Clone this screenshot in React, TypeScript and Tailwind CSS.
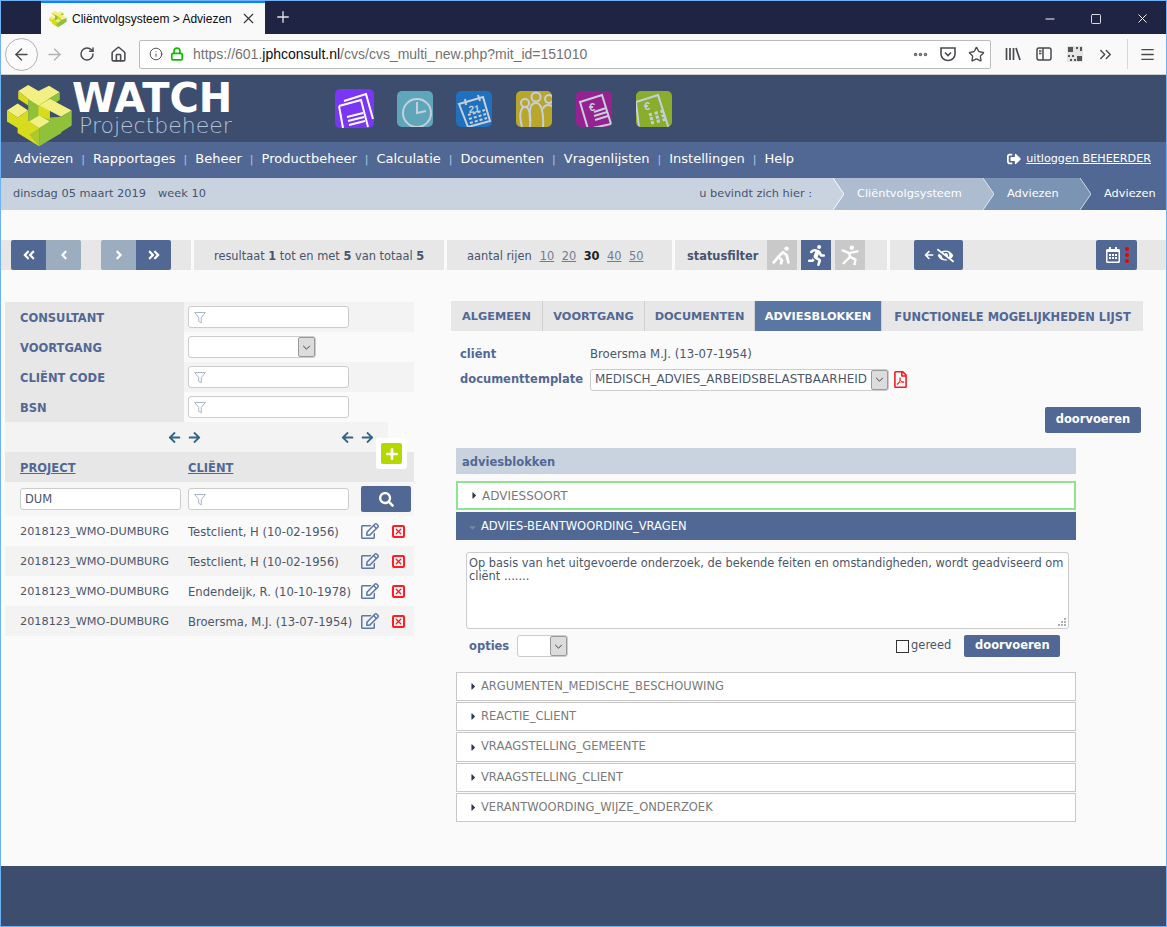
import type { ReactNode } from "react";
import { ArrowLeft, ArrowRight, Info, Lock, Minus, Plus, RotateCw, Square, X, Ellipsis, Star, Home, Menu, ChevronsRight } from "lucide-react";
import {
  FaAngleDoubleLeft,
  FaAngleDoubleRight,
  FaAngleLeft,
  FaAngleRight,
  FaArrowLeft,
  FaArrowRight,
  FaCaretDown,
  FaCaretRight,
  FaEyeSlash,
  FaRegCalendarAlt,
  FaRegEdit,
  FaRegFilePdf,
  FaRunning,
  FaSearch,
  FaSignOutAlt,
} from "react-icons/fa";

const navItems = ["Adviezen", "Rapportages", "Beheer", "Productbeheer", "Calculatie", "Documenten", "Vragenlijsten", "Instellingen", "Help"];
const rowSizes = ["10", "20", "30", "40", "50"];
const tabs = [
  { label: "ALGEMEEN", width: "w-[92px]", size: "text-[11.3px]" },
  { label: "VOORTGANG", width: "w-[102px]", size: "text-[11.3px]" },
  { label: "DOCUMENTEN", width: "w-[110px]", size: "text-[11.3px]" },
  { label: "ADVIESBLOKKEN", width: "w-[127px]", size: "text-[11.3px]", active: true },
  { label: "FUNCTIONELE MOGELIJKHEDEN LIJST", width: "w-[261px]", size: "text-[11.45px]" },
];
const results = [
  { client: "Testclient, H (10-02-1956)" },
  { client: "Testclient, H (10-02-1956)" },
  { client: "Endendeijk, R. (10-10-1978)" },
  { client: "Broersma, M.J. (13-07-1954)" },
];
const closedBlocks = [
  { label: "ARGUMENTEN_MEDISCHE_BESCHOUWING", height: "h-[29px]" },
  { label: "REACTIE_CLIENT", height: "h-[29px]" },
  { label: "VRAAGSTELLING_GEMEENTE", height: "h-[30px]" },
  { label: "VRAAGSTELLING_CLIENT", height: "h-[29px]" },
  { label: "VERANTWOORDING_WIJZE_ONDERZOEK", height: "h-[29px]" },
];

function WatchLogo({ className }: { className: string }) {
  return (
    <svg viewBox="15 15 202 194" className={className}>
      <polygon fill="#8fc23a" points="82,62 147,60 147,130 115,150 82,130" />
      <polygon fill="#d9dc1e" points="113,82 147,62 147,125 113,112" />
      <polygon fill="#f2f084" points="52,38 82,20 113,38 145,22 177,42 147,60 113,82 82,62" />
      <polygon fill="#d9dc1e" points="52,38 82,62 82,82 52,62" />
      <polygon fill="#8fc23a" points="177,42 177,65 147,84 147,60" />
      <polygon fill="#f2f084" points="18,97 50,76 82,97 50,118" />
      <polygon fill="#d9dc1e" points="18,97 50,118 82,97 82,128 115,150 115,205 50,165 50,150 18,130" />
      <polygon fill="#f2f084" points="116,82 148,62 213,97 181,116" />
      <polygon fill="#8fc23a" points="115,150 147,130 147,118 181,116 213,97 213,142 182,162 182,165 115,205" />
      <polygon fill="#f2f084" points="85,130 115,112 147,130 115,150" />
      <polygon fill="#a9c92c" points="85,170 115,150 115,205" />
    </svg>
  );
}

function AppIcon({ className, children }: { className: string; children: ReactNode }) {
  return (
    <svg viewBox="0 0 36 36" className={className}>
      <g fill="none" stroke="#c6cfdb" strokeWidth="1.6">
        {children}
      </g>
    </svg>
  );
}

function AppIcons() {
  return (
    <div className="ml-[101px] flex items-center">
      <svg viewBox="0 0 39 39" className="h-[39px] w-[39px] rounded-[5px] bg-[#7a35f5]">
        <g fill="none" stroke="#ffffff" strokeWidth="2">
          <path d="M9 12 L31 5 L38 30" />
          <path d="M4 17 L26 11 L33 38 M8 39 L4 17" fill="#7a35f5" />
          <path d="M12 28 L28 24 M13 32 L29 28 M14 36 L30 32" />
        </g>
      </svg>
      <AppIcon className="ml-[23px] h-[36px] w-[36px] rounded-[5px] bg-[#5fa6bb]">
        <circle cx="20" cy="22" r="14" strokeWidth="2" />
        <path d="M20 11 V22 L29 20" strokeWidth="2" />
      </AppIcon>
      <AppIcon className="ml-[23px] h-[36px] w-[36px] rounded-[5px] bg-[#1f70bd]">
        <path d="M3 13 L27 6 L34 30 L12 36 Z" strokeWidth="2" />
        <path d="M9 8 L10 14 M22 4 L24 10" strokeWidth="2" />
        <path d="M12 24 L29 19 M13 28 L30 23 M14 32 L31 27" strokeDasharray="3 2" strokeWidth="2" />
        <text x="13" y="22" fontSize="10" fontWeight="700" fill="#c6cfdb" stroke="none" transform="rotate(-6 13 22)" fontFamily="Liberation Sans, sans-serif">21</text>
      </AppIcon>
      <AppIcon className="ml-[24px] h-[36px] w-[36px] rounded-[5px] bg-[#b9a72b]">
        <path d="M6 36 C3 26 4 16 9 16 C14 16 15 26 14 36" strokeWidth="2" />
        <circle cx="9" cy="12" r="4" strokeWidth="2" />
        <path d="M14 30 C13 16 15 12 20 12 C25 12 28 20 27 36" strokeWidth="2" />
        <circle cx="20" cy="6" r="4.5" strokeWidth="2" />
        <path d="M27 18 C28 14 32 13 36 15" strokeWidth="2" />
        <circle cx="33" cy="8" r="4" strokeWidth="2" />
      </AppIcon>
      <AppIcon className="ml-[24px] h-[36px] w-[36px] rounded-[5px] bg-[#952290]">
        <path d="M4 11 L26 4 L35 33 L12 38 Z" strokeWidth="2" />
        <path d="M18 21 L30 17 M18 25 L31 21 M19 29 L32 25" strokeWidth="2" />
        <text x="13" y="20" fontSize="11" fontWeight="700" fill="#c6cfdb" stroke="none" fontFamily="Liberation Sans, sans-serif">€</text>
      </AppIcon>
      <AppIcon className="ml-[24px] h-[36px] w-[36px] rounded-[5px] bg-[#8aad2e]">
        <path d="M0 11 L22 4 L33 38" strokeWidth="2" />
        <path d="M0 11 L3 36" strokeWidth="2" />
        <path d="M14 28 L30 24 M15 32 L31 28 M13 24 L27 20" strokeDasharray="3 3" strokeWidth="3" />
        <text x="8" y="19" fontSize="11" fontWeight="700" fill="#c6cfdb" stroke="none" fontFamily="Liberation Sans, sans-serif">€</text>
      </AppIcon>
    </div>
  );
}

function BrowserChrome() {
  return (
    <>
      <div className="flex h-[33px] items-end bg-[#1f2344] font-['Liberation_Sans',sans-serif]">
        <div className="ml-[40px] flex h-[33px] w-[224px] items-center border-t-2 border-[#0a84ff] bg-[#f9f9fa] pl-[8px] text-[#0c0c0d]">
          <WatchLogo className="h-[18px] w-[18px]" />
          <span className="ml-[5px] w-[168px] overflow-hidden text-[12px] whitespace-nowrap">Cliëntvolgsysteem &gt; Adviezen</span>
          <X size={17} strokeWidth={1.6} className="ml-[0px] text-[#333]" />
        </div>
        <Plus size={18} strokeWidth={1.8} className="mb-[8px] ml-[9px] text-[#e2e3ea]" />
        <div className="mb-[8px] ml-auto flex items-center text-white">
          <Minus size={14} strokeWidth={1.7} />
          <Square size={12} strokeWidth={1.7} className="ml-[33px]" />
          <X size={15} strokeWidth={1.5} className="mr-[16px] ml-[33px]" />
        </div>
      </div>
      <div className="flex h-[41px] items-center border-b border-[#cdcdcd] bg-[#f9f9fa] font-['Liberation_Sans',sans-serif] text-[#4a4a4f]">
        <div className="ml-[4px] flex h-[33px] w-[33px] items-center justify-center rounded-full border border-[#b1b1b3] bg-[#fbfbfb]">
          <ArrowLeft size={19} strokeWidth={1.7} />
        </div>
        <ArrowRight size={19} strokeWidth={1.7} className="ml-[7px] text-[#b4b4b6]" />
        <RotateCw size={16} strokeWidth={2.2} className="ml-[15px]" />
        <Home size={17} strokeWidth={2.2} className="ml-[15px]" />
        <div className="ml-[12px] flex h-[29px] w-[852px] items-center rounded-[2px] border border-[#bcbcbc] bg-white pl-[9px]">
          <Info size={14} strokeWidth={1.6} />
          <Lock size={14} strokeWidth={3} className="ml-[7px] text-[#12bc00]" />
          <span className="ml-[9px] text-[14px] text-[#737373]">
            https://601.<span className="text-[#0c0c0d]">jphconsult.nl</span>/cvs/cvs_multi_new.php?mit_id=151010
          </span>
          <Ellipsis size={17} strokeWidth={3} className="ml-auto text-[#6a6a6c]" />
          <svg viewBox="0 0 16 16" className="ml-[11px] h-[16px] w-[16px]" fill="none" stroke="currentColor" strokeWidth="1.6">
            <path d="M1 2 H15 V8 A7 6.5 0 0 1 1 8 Z" />
            <path d="M5 6.5 L8 9.5 L11 6.5" />
          </svg>
          <Star size={17} strokeWidth={1.9} className="mr-[5px] ml-[12px]" />
        </div>
        <svg viewBox="0 0 16 16" className="ml-[14px] h-[16px] w-[16px]" fill="none" stroke="currentColor" strokeWidth="1.7">
          <path d="M1.5 2 V14 M5 2 V14 M8.5 2 V14 M11 2 L15 14" />
        </svg>
        <svg viewBox="0 0 16 16" className="ml-[15px] h-[16px] w-[16px]" fill="none" stroke="currentColor" strokeWidth="1.5">
          <rect x="1" y="2" width="14" height="12" rx="2" />
          <path d="M7 2 V14 M3 5 H5.5 M3 7.5 H5.5" />
        </svg>
        <svg viewBox="0 0 16 16" className="ml-[15px] h-[16px] w-[16px]">
          <rect width="16" height="16" fill="#e4e4e4" />
          <path d="M1 1 H6 V6 H1 Z M9 1 H11 V3 H9 Z M13 1 H15 V5 H13 Z M1 9 H3 V11 H1 Z M5 9 H7 V11 H5 Z M3 13 H5 V15 H3 Z M10 10 H15 V15 H10 Z M7 13 H9 V15 H7 Z" fill="#555" />
        </svg>
        <ChevronsRight size={19} strokeWidth={1.8} className="ml-[13px]" />
        <div className="ml-[12px] h-[30px] w-px bg-[#d7d7d8]" />
        <Menu size={17} strokeWidth={1.8} className="ml-[11px]" />
      </div>
    </>
  );
}

function BreadcrumbStep({ label, from, to, fromClass, width, pl }: { label: string; from: string; to: string; fromClass: string; width: string; pl: string }) {
  return (
    <div className={`relative flex h-full items-center text-white ${width} ${pl} ${fromClass}`}>
      <svg viewBox="0 0 10 32" preserveAspectRatio="none" className="absolute top-0 left-0 h-[32px] w-[11px]">
        <polygon points="0,0 10,16 0,32" fill={from} />
        <polyline points="0,0 10,16 0,32" fill="none" stroke={to} strokeWidth="0.9" />
      </svg>
      {label}
    </div>
  );
}

function Breadcrumb() {
  return (
    <div className="flex h-[32px] items-center bg-[#c9d3e0] text-[11.35px] text-[#47546f]">
      <span className="ml-[12px]">dinsdag 05 maart 2019</span>
      <span className="ml-[12px]">week 10</span>
      <span className="mr-[21px] ml-auto">u bevindt zich hier :</span>
      <BreadcrumbStep label="Cliëntvolgsysteem" from="#c9d3e0" to="#ffffff" fromClass="bg-[#adbccf]" width="w-[150px]" pl="pl-[24px]" />
      <BreadcrumbStep label="Adviezen" from="#adbccf" to="#e4e9f0" fromClass="bg-[#7c94b4]" width="w-[97px]" pl="pl-[24px]" />
      <BreadcrumbStep label="Adviezen" from="#7c94b4" to="#d3dbe6" fromClass="bg-[#526894]" width="w-[86px]" pl="pl-[24px]" />
    </div>
  );
}

function PagerButton({ dark, className, children }: { dark?: boolean; className?: string; children: ReactNode }) {
  return (
    <div className={`flex h-[30px] w-[35px] items-center justify-center text-white ${dark ? "bg-[#526894]" : "bg-[#9dadc0]"} ${className ?? ""}`}>
      {children}
    </div>
  );
}

function StatusButton({ active, children }: { active?: boolean; children: ReactNode }) {
  return (
    <div className={`flex h-[30px] w-[30px] items-center justify-center ${active ? "bg-[#526894]" : "bg-[#c9c9c9]"}`}>{children}</div>
  );
}

function Toolbar() {
  return (
    <div className="mt-[30px] flex h-[30px] gap-[3px] text-[11.4px] text-[#47546f]">
      <div className="flex w-[190px] items-center bg-[#e7e7e7] pl-[10px]">
        <PagerButton dark className="rounded-l-[2px]">
          <FaAngleDoubleLeft size={14} />
        </PagerButton>
        <PagerButton className="rounded-r-[2px]">
          <FaAngleLeft size={14} />
        </PagerButton>
        <PagerButton className="ml-[20px] rounded-l-[2px]">
          <FaAngleRight size={14} />
        </PagerButton>
        <PagerButton dark className="rounded-r-[2px]">
          <FaAngleDoubleRight size={14} />
        </PagerButton>
      </div>
      <div className="flex w-[250px] items-center bg-[#e7e7e7] pt-[4px] pl-[20px]">
        <span>
          resultaat <b>1</b> tot en met <b>5</b> van totaal <b>5</b>
        </span>
      </div>
      <div className="flex w-[225px] items-center bg-[#e7e7e7] pt-[4px] pl-[20px]">
        <span>aantal rijen</span>
        <div className="ml-[8px] flex gap-[7.5px]">
          {rowSizes.map((size) =>
            size === "30" ? (
              <b key={size} className="text-[#222]">
                {size}
              </b>
            ) : (
              <span key={size} className="text-[#6f7c94] underline">
                {size}
              </span>
            ),
          )}
        </div>
      </div>
      <div className="flex w-[212px] items-center bg-[#e7e7e7] pl-[12px]">
        <b className="pt-[4px]">statusfilter</b>
        <div className="ml-[9px] flex gap-[4px]">
          <StatusButton>
            <svg viewBox="0 0 24 24" className="h-[22px] w-[22px]" fill="none" stroke="#ffffff" strokeWidth="3" strokeLinecap="round" strokeLinejoin="round">
              <circle cx="17" cy="5" r="2.4" fill="#ffffff" stroke="none" />
              <path d="M3 20 L8 14 L13 9 L17 12 L19 20 M8 14 L12 18 L11 21" />
            </svg>
          </StatusButton>
          <StatusButton active>
            <FaRunning size={21} className="text-white" />
          </StatusButton>
          <StatusButton>
            <svg viewBox="0 0 24 24" className="h-[22px] w-[22px]" fill="none" stroke="#ffffff" strokeWidth="2.6" strokeLinecap="round" strokeLinejoin="round">
              <circle cx="14" cy="4" r="2.4" fill="#ffffff" stroke="none" />
              <path d="M4 7 L11 10 L20 8 M11 10 L12 14 L5 21 M12 14 L18 17 L17 22" />
            </svg>
          </StatusButton>
        </div>
      </div>
      <div className="flex flex-1 items-center bg-[#e7e7e7] pl-[24px]">
        <div className="flex h-[30px] w-[49px] items-center justify-center gap-[3px] rounded-[2px] bg-[#526894] text-white">
          <FaArrowLeft size={10} />
          <FaEyeSlash size={17} />
        </div>
        <div className="ml-[133px] flex h-[30px] w-[41px] items-center justify-center gap-[4px] rounded-[2px] bg-[#526894] text-white">
          <FaRegCalendarAlt size={16} />
          <span className="flex flex-col gap-[2px]">
            <span className="h-[4px] w-[4px] rounded-full bg-[#f00000]" />
            <span className="h-[4px] w-[4px] rounded-full bg-[#f00000]" />
            <span className="h-[4px] w-[4px] rounded-full bg-[#f00000]" />
          </span>
        </div>
      </div>
    </div>
  );
}

function FilterIcon() {
  return (
    <svg viewBox="0 0 12 12" className="h-[13px] w-[12px] shrink-0" fill="none" stroke="#a9b6c7" strokeWidth="1">
      <path d="M0.7 1 H11.3 L7.3 6 V11.3 L4.7 9.8 V6 Z" />
    </svg>
  );
}

function FilterInput() {
  return (
    <div className="flex h-[22px] w-[161px] items-center rounded-[3px] border border-[#cccccc] bg-white pl-[5px]">
      <FilterIcon />
      <input className="h-full min-w-0 flex-1 bg-transparent outline-none" />
    </div>
  );
}

function SelectBox({ className, children }: { className: string; children?: ReactNode }) {
  return (
    <div className={`flex h-[22px] items-center rounded-[3px] border border-[#cccccc] bg-white ${className}`}>
      <span className="flex-1 overflow-hidden pl-[4px] whitespace-nowrap">{children}</span>
      <span className="flex h-full w-[17px] items-center justify-center rounded-[2px] border border-[#9a9a9a] bg-[#dcdcdc]">
        <svg viewBox="0 0 10 6" className="h-[5px] w-[9px]" fill="none" stroke="#333" strokeWidth="1.1">
          <path d="M1 1 L5 5 L9 1" />
        </svg>
      </span>
    </div>
  );
}

function FilterRow({ label, odd, children }: { label: string; odd: boolean; children: ReactNode }) {
  return (
    <div className={`flex h-[30px] items-center ${odd ? "bg-[#f3f3f3]" : ""}`}>
      <div className="flex h-full w-[179px] items-center bg-[#e7e7e7] pt-[3px] pl-[15px] font-bold text-[#526894]">{label}</div>
      <div className="ml-[4px]">{children}</div>
    </div>
  );
}

function EditIcon() {
  return <FaRegEdit size={18} className="text-[#5a78a8]" />;
}

function RemoveIcon() {
  return (
    <span className="flex h-[13px] w-[13px] items-center justify-center rounded-[2px] border-2 border-[#ff1c24]">
      <X size={9} strokeWidth={3.2} className="text-[#f01c24]" />
    </span>
  );
}

function LeftPanel() {
  return (
    <div className="relative mt-[32px] ml-[4px] w-[409px] text-[11.5px] text-[#4c566b]">
      <FilterRow label="CONSULTANT" odd>
        <FilterInput />
      </FilterRow>
      <FilterRow label="VOORTGANG" odd={false}>
        <SelectBox className="w-[128px]" />
      </FilterRow>
      <FilterRow label="CLIËNT CODE" odd>
        <FilterInput />
      </FilterRow>
      <FilterRow label="BSN" odd={false}>
        <FilterInput />
      </FilterRow>
      <div className="flex h-[30px] w-[383px] items-center bg-[#f3f3f3] text-[#2f6585]">
        <FaArrowLeft size={13} className="ml-[163px]" />
        <FaArrowRight size={13} className="ml-[7px]" />
        <FaArrowLeft size={13} className="ml-[140px]" />
        <FaArrowRight size={13} className="ml-[7px]" />
      </div>
      <div className="flex h-[30px] items-center bg-[#e7e7e7] pt-[3px] font-bold text-[#526894]">
        <span className="ml-[15px] w-[168px] underline">PROJECT</span>
        <span className="underline">CLIËNT</span>
      </div>
      <div className="absolute top-[136px] left-[371px] flex h-[31px] w-[31px] items-center justify-center rounded-[3px] bg-white">
        <span className="flex h-[21px] w-[21px] items-center justify-center rounded-[2px] bg-[#b5d800]">
          <Plus size={16} strokeWidth={4} className="text-white" />
        </span>
      </div>
      <div className="flex h-[34px] items-center bg-[#f6f6f6]">
        <input defaultValue="DUM" className="ml-[15px] h-[22px] w-[161px] rounded-[3px] border border-[#cccccc] bg-white pl-[4px] outline-none" />
        <div className="ml-[7px]">
          <FilterInput />
        </div>
        <div className="ml-[12px] flex h-[26px] w-[50px] items-center justify-center rounded-[2px] bg-[#526894] text-white">
          <FaSearch size={15} />
        </div>
      </div>
      {results.map((row, index) => (
        <div key={index} className={`flex h-[30px] items-center ${index % 2 === 1 ? "bg-[#f3f3f3]" : ""}`}>
          <span className="ml-[15px] w-[168px] pt-[3px] text-[11.25px]">2018123_WMO-DUMBURG</span>
          <span className="w-[173px] pt-[3px] text-[11.6px] whitespace-nowrap">{row.client}</span>
          <EditIcon />
          <span className="ml-[13px]">
            <RemoveIcon />
          </span>
        </div>
      ))}
    </div>
  );
}

function BlockCaret({ className }: { className?: string }) {
  return <FaCaretRight size={11} className={className ?? "text-[#2d3a55]"} />;
}

function RightPanel() {
  return (
    <div className="mt-[31px] ml-[37px] w-[692px] text-[11.5px] text-[#4c566b]">
      <div className="flex h-[30px]">
        {tabs.map((tab) => (
          <div
            key={tab.label}
            className={`flex items-center justify-center border-r border-[#d0d0d0] pt-[3px] font-bold whitespace-nowrap last:border-r-0 ${tab.size} ${tab.width} ${
              tab.active ? "bg-[#5a76a3] text-white" : "bg-[#e7e7e7] text-[#526894]"
            }`}
          >
            {tab.label}
          </div>
        ))}
      </div>
      <div className="mt-[11px] flex h-[25px] items-center pl-[9px]">
        <b className="w-[130px] text-[#526894]">cliënt</b>
        <span className="text-[11.7px]">Broersma M.J. (13-07-1954)</span>
      </div>
      <div className="mt-[2px] flex h-[21px] items-center pl-[9px]">
        <b className="w-[130px] text-[#526894]">documenttemplate</b>
        <SelectBox className="w-[299px] text-[11.95px]">MEDISCH_ADVIES_ARBEIDSBELASTBAARHEID</SelectBox>
        <FaRegFilePdf size={17} className="ml-[3px] text-[#f01c24]" />
      </div>
      <div className="mt-[17px] flex justify-end pr-[2px]">
        <div className="flex h-[26px] w-[96px] items-center justify-center rounded-[2px] bg-[#526894] font-bold text-white">doorvoeren</div>
      </div>
      <div className="mt-[15px] ml-[5px] w-[620px]">
        <div className="flex h-[26px] items-center bg-[#c9d3e0] pt-[3px] pl-[6px] font-bold text-[#526894]">adviesblokken</div>
        <div className="mt-[7px] flex h-[29px] items-center border-2 border-[#8fe58f] bg-white pl-[11px] text-[12px] text-[#7a7a7a]">
          <BlockCaret />
          <span className="ml-[2px]">ADVIESSOORT</span>
        </div>
        <div className="mt-[2px] flex h-[28px] items-center bg-[#526894] pt-[2px] pl-[11px] text-white">
          <FaCaretDown size={11} className="text-[#76879f]" />
          <span className="ml-[3px]">ADVIES-BEANTWOORDING_VRAGEN</span>
        </div>
        <div className="relative mt-[12px] ml-[10px] h-[77px] w-[603px]">
          <textarea
            defaultValue="Op basis van het uitgevoerde onderzoek, de bekende feiten en omstandigheden, wordt geadviseerd om cliënt ......."
            className="block h-full w-full resize-none rounded-[3px] border border-[#cccccc] bg-white px-[2px] pt-[4px] text-[11.4px] leading-[13px] text-[#4c566b] outline-none"
          />
          <svg viewBox="0 0 8 8" className="absolute right-[3px] bottom-[3px] h-[8px] w-[8px]" fill="#b0b0b0">
            <path d="M6 0 H8 V2 H6 Z M3 3 H5 V5 H3 Z M6 3 H8 V5 H6 Z M0 6 H2 V8 H0 Z M3 6 H5 V8 H3 Z M6 6 H8 V8 H6 Z" />
          </svg>
        </div>
        <div className="mt-[6px] flex h-[22px] items-center">
          <b className="ml-[13px] w-[48px] pt-[2px] text-[#526894]">opties</b>
          <SelectBox className="w-[51px]" />
          <span className="ml-[328px] h-[13px] w-[13px] border border-[#333333] bg-white" />
          <span className="ml-[2px]">gereed</span>
          <div className="ml-[13px] flex h-[22px] w-[96px] items-center justify-center rounded-[2px] bg-[#526894] font-bold text-white">doorvoeren</div>
        </div>
        <div className="mt-[15px] flex flex-col gap-[1px]">
          {closedBlocks.map((block) => (
            <div key={block.label} className={`flex items-center border border-[#c8c8c8] bg-white pl-[11px] text-[#7a7a7a] ${block.height}`}>
              <BlockCaret />
              <span className="ml-[2px]">{block.label}</span>
            </div>
          ))}
        </div>
      </div>
    </div>
  );
}

export default function App() {
  return (
    <div className="flex h-[927px] w-full flex-col overflow-hidden border border-[#6db2f4] bg-[#fafafa] font-['DejaVu_Sans',sans-serif]">
      <BrowserChrome />
      <header className="relative flex h-[67px] bg-[#3d4d6e]">
        <WatchLogo className="absolute top-[8px] left-[5px] z-10 h-[65px] w-[67px]" />
        <div className="ml-[71px] flex w-[162px] flex-col leading-none">
          <span className="mt-[5px] text-[40px] leading-[37px] font-bold whitespace-nowrap text-white">WATCH</span>
          <span className="ml-[7px] text-[22px] leading-[18px] font-light whitespace-nowrap text-[#b4c2d6]">Projectbeheer</span>
        </div>
        <AppIcons />
      </header>
      <nav className="flex h-[36px] items-center bg-[#526894] pb-[2px] pl-[13px] text-[13px] text-white">
        {navItems.map((item, index) => (
          <span key={item} className="flex items-center">
            {index > 0 ? <span className="mx-[8px] pt-[2px] text-[11px] text-[#a9c6e8]">|</span> : null}
            {item}
          </span>
        ))}
        <span className="mr-[15px] ml-auto flex items-center text-[11.2px] underline">
          <FaSignOutAlt size={14} className="mr-[5px]" />
          uitloggen BEHEERDER
        </span>
      </nav>
      <Breadcrumb />
      <Toolbar />
      <main className="flex flex-1 items-start">
        <LeftPanel />
        <RightPanel />
      </main>
      <footer className="h-[60px] bg-[#3d4d6e]" />
    </div>
  );
}
